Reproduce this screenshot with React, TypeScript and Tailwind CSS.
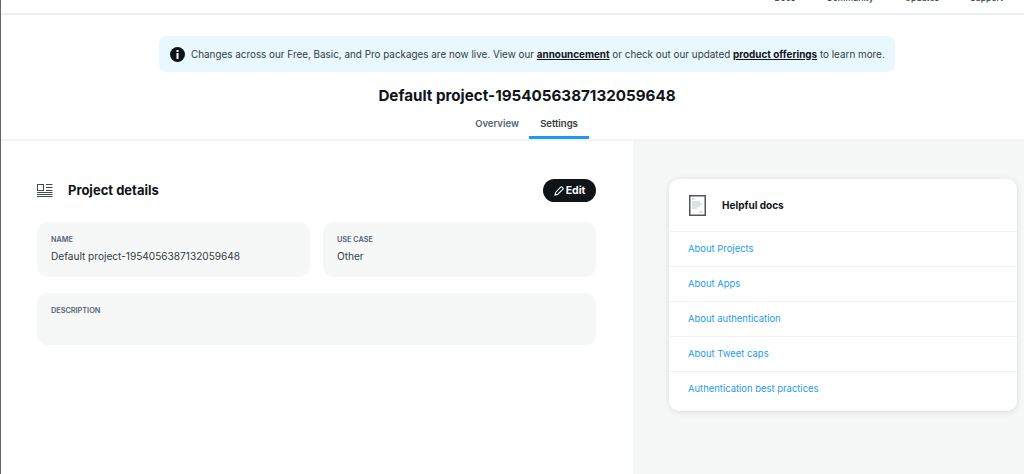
const navLinks = ["Docs", "Community", "Updates", "Support"];

const docs = [
  "About Projects",
  "About Apps",
  "About authentication",
  "About Tweet caps",
  "Authentication best practices",
];

function InfoIcon() {
  return (
    <svg width="15" height="15" viewBox="0 0 15 15" className="shrink-0">
      <circle cx="7.5" cy="7.5" r="7.5" fill="#0f1419" />
      <rect x="6.5" y="3" width="2" height="2" fill="#fff" />
      <rect x="6.5" y="6" width="2" height="6" fill="#fff" />
    </svg>
  );
}

function DetailsIcon() {
  return (
    <svg width="16" height="14" viewBox="0 0 16 14" fill="none" stroke="#444b50" strokeWidth="1">
      <rect x="0.5" y="0.5" width="6" height="6" />
      <path d="M9 0.5h6.5M9 3.5h6.5M9 6.5h6.5M0 8.5h15.5M0 10.5h15.5M0 12.5h15.5" />
    </svg>
  );
}

function DocIcon() {
  return (
    <svg width="17" height="21" viewBox="0 0 17 21" fill="none">
      <rect x="0.75" y="0.75" width="15.5" height="19.5" stroke="#555" strokeWidth="1.5" fill="#fff" />
      <path d="M3 4h3M3 7h8M3 9h10M3 11h8M3 13h5M10 17h4" stroke="#b9c4cc" strokeWidth="1.2" />
    </svg>
  );
}

function PencilIcon() {
  return (
    <svg width="10" height="10" viewBox="0 0 10 10" fill="none" stroke="#fff" strokeWidth="1.1">
      <path d="M1 9l.6-2.6L6.7 1.2a1 1 0 0 1 1.4 0l.7.7a1 1 0 0 1 0 1.4L3.6 8.4z" />
    </svg>
  );
}

function Field({ label, value, className }: { label: string; value?: string; className: string }) {
  return (
    <div className={`rounded-[10px] bg-[#f6f8f8] px-[14px] pt-[13px] ${className}`}>
      <div className="text-[7.3px] leading-[10px] font-semibold uppercase text-[#536471]">{label}</div>
      {value && <div className="mt-[3px] text-[10.1px] leading-[16px] text-[#333b41]">{value}</div>}
    </div>
  );
}

export default function App() {
  return (
    <div className="h-[474px] overflow-hidden border-l border-[#666] bg-white font-['Inter',sans-serif] text-[#0f1419]">
      {/* Top nav, scrolled mostly out of view */}
      <header className="flex h-[15px] items-end justify-end gap-[31px] overflow-hidden border-b-2 border-[#e9eef1] pr-[21px]">
        {navLinks.map((link) => (
          <span key={link} className="mb-[9px] text-[8.6px] leading-[12px] font-medium text-[#333b41]">
            {link}
          </span>
        ))}
      </header>

      <div className="flex flex-col items-center pl-[29px] pt-[21px]">
        <div className="flex h-[36px] w-[736px] items-center gap-[6px] rounded-[8px] bg-[#e8f8fe] pl-[11px] text-[9.9px] text-[#333b41]">
          <InfoIcon />
          <p className="whitespace-nowrap">
            Changes across our Free, Basic, and Pro packages are now live. View our{" "}
            <span className="font-bold text-[#0f1419] underline">announcement</span> or check out our updated{" "}
            <span className="font-bold text-[#0f1419] underline">product offerings</span> to learn more.
          </p>
        </div>
        <h1 className="mt-[13px] text-[15.2px] leading-[22px] font-bold">Default project-1954056387132059648</h1>
        <nav className="mt-[7px] flex h-[25px] text-[9.5px] font-semibold">
          <div className="flex w-[64px] justify-center pt-[3px] text-[#536471]">Overview</div>
          <div className="flex w-[60px] justify-center border-b-[3px] border-[#1d9bf0] pt-[3px] text-[#333b41]">
            Settings
          </div>
        </nav>
      </div>

      <div className="flex h-[335px] border-t-2 border-[#f1f3f4]">
        <main className="w-[632px] bg-white pl-[36px] pt-[38px] pr-[37px]">
          <div className="flex h-[23px] items-center justify-between">
            <div className="flex items-center gap-[15px]">
              <DetailsIcon />
              <h2 className="text-[13px] font-bold">Project details</h2>
            </div>
            <button className="flex h-[23px] w-[53px] items-center justify-center gap-[2px] rounded-full bg-[#0f1419] text-[10.5px] font-bold text-white">
              <PencilIcon />
              Edit
            </button>
          </div>
          <div className="mt-[20px] grid grid-cols-2 gap-x-[13px] gap-y-[16px]">
            <Field label="Name" value="Default project-1954056387132059648" className="h-[55px]" />
            <Field label="Use case" value="Other" className="h-[55px]" />
            <Field label="Description" className="col-span-2 h-[52px]" />
          </div>
        </main>

        <aside className="flex-1 bg-[#f6f8f8] pl-[36px] pr-[7px] pt-[38px]">
          <div className="h-[232px] rounded-[10px] bg-white shadow-[0_1px_6px_rgba(0,0,0,0.12)]">
            <div className="flex h-[52px] items-center gap-[16px] pl-[20px]">
              <DocIcon />
              <h3 className="text-[10px] font-bold">Helpful docs</h3>
            </div>
            {docs.map((doc) => (
              <div key={doc} className="flex h-[35px] items-center border-t border-[#eff3f4] pl-[19px] pt-[1px] text-[9.45px] text-[#1d9bf0]">
                {doc}
              </div>
            ))}
          </div>
        </aside>
      </div>
    </div>
  );
}
